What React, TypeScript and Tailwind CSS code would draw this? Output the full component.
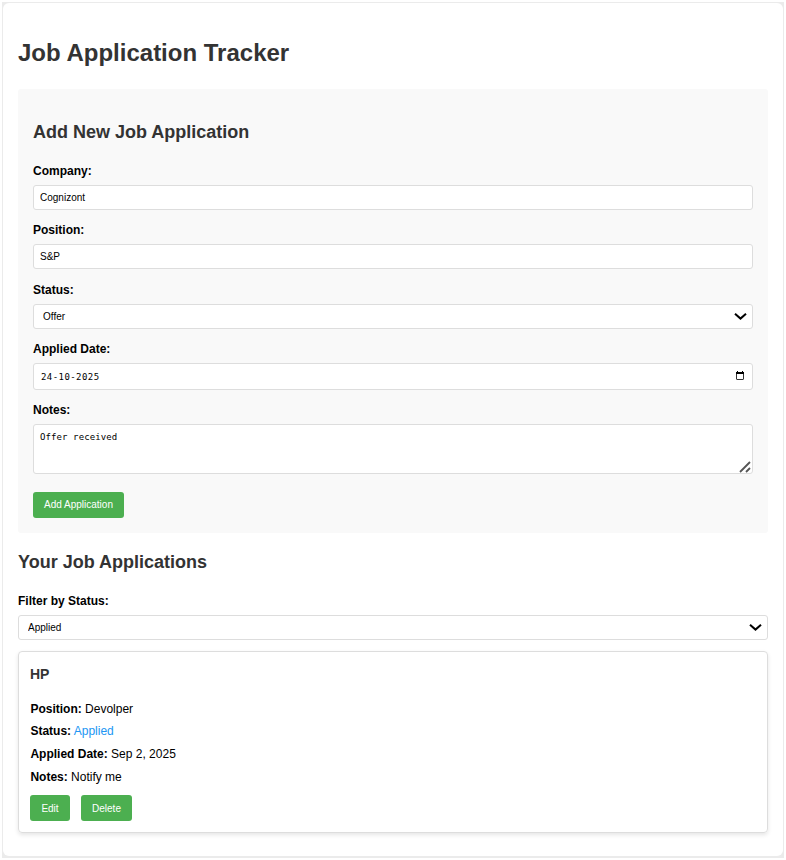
import type { ReactNode } from "react";

const field =
  "block w-full rounded-[3px] border border-[#dddddd] bg-white text-black outline-none";

function Label({ children }: { children: ReactNode }) {
  return <label className="block h-[14px] text-[12px] leading-[14px] font-bold">{children}</label>;
}

function Chevron() {
  return (
    <svg className="pointer-events-none absolute top-[8px] right-[6px]" width="13" height="9" viewBox="0 0 13 9" fill="none" stroke="#000" strokeWidth="2">
      <path d="M1 1.7 6.5 6.6 12 1.7" />
    </svg>
  );
}

function Select({ value }: { value: string }) {
  return (
    <div className="relative mt-[7px]">
      <select className={`${field} h-[25px] appearance-none pl-[9px] text-[10px]`} defaultValue={value}>
        {["Applied", "Interview", "Offer", "Rejected"].map((s) => (
          <option key={s}>{s}</option>
        ))}
      </select>
      <Chevron />
    </div>
  );
}

function Button({ children, className }: { children: ReactNode; className: string }) {
  return (
    <button className={`block h-[26px] rounded-[3px] bg-[#4caf50] text-center text-[10px] text-white ${className}`}>
      {children}
    </button>
  );
}

function Detail({ name, children }: { name: string; children: ReactNode }) {
  return (
    <p className="text-[12px] leading-[22.7px]">
      <strong>{name}:</strong> {children}
    </p>
  );
}

export default function App() {
  return (
    <div className="h-[860px] w-[786px] bg-white pt-[2px] pl-[2px] font-['Liberation_Sans',Arial,sans-serif] text-black">
      <div className="h-[856px] w-[782px] bg-[#ebebeb] p-px">
        <main className="h-[853px] w-[780px] rounded-[6px] bg-white px-[15px] pt-[36px]">
          <h1 className="h-[28px] text-[24px] leading-[28px] font-bold text-[#333]">Job Application Tracker</h1>

          <section className="mt-[22px] h-[444px] rounded-[3px] bg-[#f9f9f9] px-[15px] pt-[33px]">
            <h2 className="h-[21px] text-[18px] leading-[21px] font-bold text-[#333]">Add New Job Application</h2>
            <div className="mt-[21px]">
              <Label>Company:</Label>
              <input className={`${field} mt-[7px] h-[25px] px-[6px] text-[10px]`} defaultValue="Cognizont" />
            </div>
            <div className="mt-[13px]">
              <Label>Position:</Label>
              <input className={`${field} mt-[7px] h-[25px] px-[6px] text-[10px]`} defaultValue="S&P" />
            </div>
            <div className="mt-[14px]">
              <Label>Status:</Label>
              <Select value="Offer" />
            </div>
            <div className="mt-[13px]">
              <Label>Applied Date:</Label>
              <div className="relative mt-[7px]">
                <input
                  className={`${field} h-[27px] px-[7px] font-['DejaVu_Sans_Mono',monospace] text-[9px] tracking-[0.43px]`}
                  defaultValue="24-10-2025"
                />
                <svg className="absolute top-[8px] right-[9px]" width="8" height="9" viewBox="0 0 8 9" fill="none">
                  <rect x=".5" y="1.5" width="7" height="7" rx=".5" stroke="#333" />
                  <path d="M0 1h8v2H0zM1 0h1v1H1zM6 0h1v1H6z" fill="#000" />
                </svg>
              </div>
            </div>
            <div className="mt-[13px]">
              <Label>Notes:</Label>
              <div className="relative mt-[7px]">
                <textarea
                  className={`${field} h-[50px] resize-none px-[6px] py-[6px] font-['DejaVu_Sans_Mono',monospace] text-[9px] leading-[13px] tracking-[0.1px]`}
                  defaultValue="Offer received"
                />
                <svg className="absolute right-[2px] bottom-[1px]" width="12" height="12" viewBox="0 0 12 12" fill="none" stroke="#555" strokeWidth="1.8">
                  <path d="M1 11 11 1M7 11l4-4" />
                </svg>
              </div>
            </div>
            <Button className="mt-[18px] w-[91px] leading-[26px]">Add Application</Button>
          </section>

          <h2 className="mt-[19px] h-[21px] text-[18px] leading-[21px] font-bold text-[#333]">Your Job Applications</h2>
          <div className="mt-[21px]">
            <Label>Filter by Status:</Label>
            <Select value="Applied" />
          </div>

          <article className="mt-[11px] h-[182px] rounded-[4px] border border-[#dddddd] px-[11px] pt-[14px] shadow-[0_2px_4px_rgba(0,0,0,0.1)]">
            <h3 className="h-[16px] text-[14px] leading-[16px] font-bold text-[#333]">HP</h3>
            <div className="mt-[15.5px] pl-[0.4px]">
              <Detail name="Position">Devolper</Detail>
              <Detail name="Status">
                <span className="text-[#2196f3]">Applied</span>
              </Detail>
              <Detail name="Applied Date">Sep 2, 2025</Detail>
              <Detail name="Notes">Notify me</Detail>
            </div>
            <div className="mt-[6.7px] flex gap-[11px]">
              <Button className="w-[40px] pt-px leading-[26px]">Edit</Button>
              <Button className="w-[51px] pt-px leading-[26px]">Delete</Button>
            </div>
          </article>
        </main>
      </div>
    </div>
  );
}
